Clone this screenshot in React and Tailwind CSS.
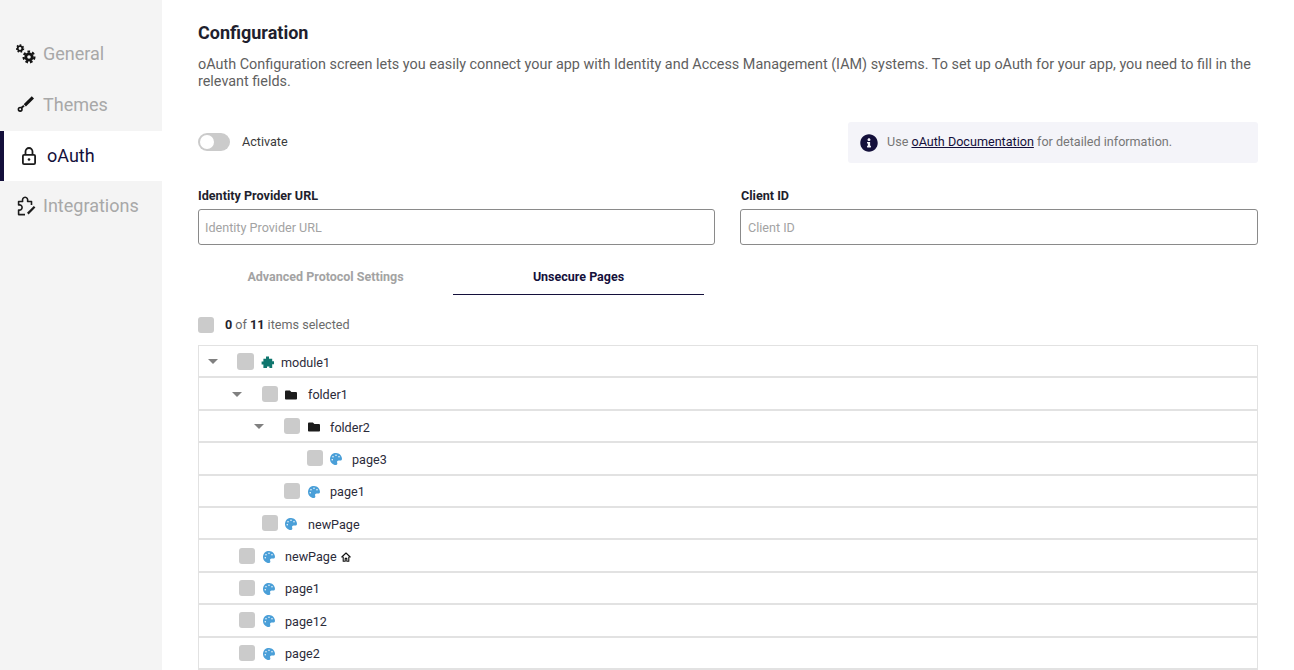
import { FaFolder, FaPalette, FaInfoCircle } from 'react-icons/fa';

const GearsIcon = () => (
    <svg viewBox="0 0 20 20" className="w-5 h-5 text-[#141414]" fill="none" stroke="currentColor">
        <circle cx="4" cy="4.5" r="2.3" strokeWidth="1.8" />
        <circle cx="4" cy="4.5" r="3.5" strokeWidth="1.5" strokeDasharray="1.6 1.55" />
        <circle cx="13" cy="13" r="3.2" strokeWidth="2.8" />
        <circle cx="13" cy="13" r="5.4" strokeWidth="2.2" strokeDasharray="2.6 2.05" />
    </svg>
);

const BrushIcon = () => (
    <svg viewBox="0 0 20 20" className="w-5 h-5 text-[#141414]" fill="none" stroke="currentColor">
        <path d="M16.9 2.3L8.8 10.4" strokeWidth="3.2" />
        <circle cx="4.2" cy="14.3" r="1.8" strokeWidth="1.6" />
        <path d="M5.4 12.8L8 10.8" strokeWidth="2" />
    </svg>
);

const LockIcon = () => (
    <svg viewBox="0 0 14 18" className="w-[14px] h-[18px] text-[#1c1c1c]" fill="none" stroke="currentColor">
        <rect x="0.9" y="7.9" width="12.2" height="9.2" rx="1.2" strokeWidth="1.8" />
        <path d="M3.5 8V4.5a3.5 3.5 0 0 1 7 0V8" strokeWidth="1.8" />
        <circle cx="7" cy="12.5" r="1.3" fill="currentColor" stroke="none" />
    </svg>
);

const IntegrationIcon = () => (
    <svg viewBox="0 0 20 20" className="w-5 h-5 text-[#1c1c1c]" fill="none" stroke="currentColor">
        <path
            d="M15.5 9V5.5H11.6C12.1 3 10.9 1.2 9.1 1.2C7.3 1.2 6.1 3 6.6 5.5H2.6V9C4.6 8.5 6.1 9.8 6.1 11.5C6.1 13.2 4.6 14.5 2.6 14V18.6H9"
            strokeWidth="1.6"
            strokeLinejoin="round"
        />
        <path d="M18.6 10.8L11.8 17.6" strokeWidth="2.2" />
    </svg>
);

const ModuleIcon = () => (
    <svg viewBox="0 0 13 13" className="w-[13px] h-[13px] text-[#0f766e]" fill="currentColor">
        <path d="M5 .5h3v2.2h3.2v2.6H13v3h-1.8V12H8.4v-1.6H6V12H2.4V8.6H.6V5.4h1.8V2.7H5z" />
    </svg>
);

const HomeIcon = () => (
    <svg viewBox="0 0 10 10" className="w-[10px] h-[10px] -mt-[2px] text-[#111111]" fill="none" stroke="currentColor" strokeWidth="1.1">
        <path d="M5 1L.8 5H2.2V9.3H4.2V6.4H5.8V9.3H7.8V5H9.2Z" strokeLinejoin="round" />
    </svg>
);

const navItems = [
    { label: 'General', icon: <GearsIcon /> },
    { label: 'Themes', icon: <BrushIcon /> },
    { label: 'oAuth', active: true, icon: <LockIcon /> },
    { label: 'Integrations', icon: <IntegrationIcon /> },
];

const rows = [
    { name: 'module1', type: 'module', arrow: 208, box: 237, icon: 261, text: 281, big: true },
    { name: 'folder1', type: 'folder', arrow: 232, box: 262, icon: 285, text: 308 },
    { name: 'folder2', type: 'folder', arrow: 254, box: 284, icon: 308, text: 330 },
    { name: 'page3', type: 'page', box: 307, icon: 330, text: 352 },
    { name: 'page1', type: 'page', box: 284, icon: 308, text: 330 },
    { name: 'newPage', type: 'page', box: 262, icon: 285, text: 308 },
    { name: 'newPage', type: 'page', box: 239, icon: 263, text: 285, home: true },
    { name: 'page1', type: 'page', box: 239, icon: 263, text: 285 },
    { name: 'page12', type: 'page', box: 239, icon: 263, text: 285 },
    { name: 'page2', type: 'page', box: 239, icon: 263, text: 285 },
];

const TreeIcon = ({ type }) => {
    if (type === 'module') return <ModuleIcon />;
    if (type === 'folder') return <FaFolder className="w-[12px] h-[12px] text-[#1c1c1c]" />;
    return <FaPalette className="w-[12px] h-[12px] text-[#4a9fd8]" />;
};

const TreeRow = ({ row }) => {
    const boxSize = row.big ? 17 : 16;
    return (
        <div
            className="h-[32.4px] flex items-center border-b-2 border-[#e2e2e2] text-[12.6px] text-[#2b2b3a]"
            style={{ paddingLeft: (row.arrow || row.box) - 199 }}
        >
            {row.arrow && (
                <span
                    className="shrink-0 w-0 h-0 mt-[1px] border-x-[5px] border-x-transparent border-t-[5px] border-t-[#808080]"
                    style={{ marginRight: row.box - row.arrow - 10 }}
                />
            )}
            <span
                className="shrink-0 rounded-[3px] bg-[#cbcbcb]"
                style={{ width: boxSize, height: boxSize, marginRight: row.icon - row.box - boxSize }}
            />
            <span className="shrink-0 flex items-center pt-[2px]" style={{ width: row.text - row.icon }}>
                <TreeIcon type={row.type} />
            </span>
            <span className="flex items-center gap-1 pt-[4px]">
                {row.name}
                {row.home && <HomeIcon />}
            </span>
        </div>
    );
};

const Field = ({ label, className, labelClass, inputClass }) => (
    <div className={className}>
        <label className={`block text-[12.6px] font-bold text-[#1f1f2e] leading-[16px] mb-[5px] ${labelClass}`}>{label}</label>
        <div className={`h-[36px] border border-[#8a8a8a] rounded-[3px] pt-[2px] flex items-center text-[12.6px] text-[#a3a3a3] ${inputClass}`}>
            {label}
        </div>
    </div>
);

const App = () => {
    return (
        <div className="flex h-[670px] overflow-hidden bg-white font-['Roboto',sans-serif]">
            {/* Sidebar */}
            <div className="w-[162px] shrink-0 bg-[#f4f4f4] pt-[29px]">
                {navItems.map((item) =>
                    item.active ? (
                        <div
                            key={item.label}
                            className="h-[50px] flex items-center gap-[11px] pl-[18px] bg-white border-l-4 border-[#14103b] text-[18px] text-[#14103b]"
                        >
                            {item.icon}
                            <span className="pb-[2px]">{item.label}</span>
                        </div>
                    ) : (
                        <div
                            key={item.label}
                            className={`${item.label === 'Integrations' ? 'h-[50px]' : 'h-[51px] pb-[1px]'} flex items-center gap-[7px] pl-[16px] text-[18px] text-[#a8a8a8]`}
                        >
                            {item.icon}
                            <span className="pb-[2px]">{item.label}</span>
                        </div>
                    )
                )}
            </div>

            {/* Main */}
            <div className="flex-1 pl-[36px] pr-[36px] pt-[22px]">
                <h1 className="text-[18px] font-bold text-[#1f1f2e] leading-[22px]">Configuration</h1>
                <p className="mt-[12px] text-[14.4px] leading-[17px] text-[#5f5f5f]">
                    oAuth Configuration screen lets you easily connect your app with Identity and Access Management (IAM) systems. To set up oAuth for your app, you need to fill in the relevant fields.
                </p>

                <div className="mt-[32px] flex items-center justify-between h-[41px]">
                    <div className="flex items-center gap-[12px]">
                        <div className="w-[32px] h-[18px] rounded-full bg-[#cbcbcb] p-[2px]">
                            <div className="w-[14px] h-[14px] rounded-full bg-white" />
                        </div>
                        <span className="text-[12.6px] text-[#3a3a3a]">Activate</span>
                    </div>
                    <div className="w-[410px] h-[41px] bg-[#f4f4f9] rounded-[3px] flex items-center gap-[9px] pl-[12px] text-[12.6px] text-[#777777]">
                        <FaInfoCircle className="w-[18px] h-[18px] text-[#14103b]" />
                        <span>
                            Use <span className="underline text-[#14103b]">oAuth Documentation</span> for detailed information.
                        </span>
                    </div>
                </div>

                <div className="mt-[25px] flex gap-[25px]">
                    <Field label="Identity Provider URL" className="w-[517px]" labelClass="" inputClass="pl-[6px]" />
                    <Field label="Client ID" className="flex-1" labelClass="pl-[1px]" inputClass="pl-[7px]" />
                </div>

                <div className="mt-[14px] flex text-[12.5px] font-bold h-[36px]">
                    <div className="w-[255px] flex items-center justify-center text-[#a3a3a3]">Advanced Protocol Settings</div>
                    <div className="w-[251px] pt-[1px] flex items-center justify-center text-[#14103b] border-b border-[#14103b]">Unsecure Pages</div>
                </div>

                <div className="mt-[21px] flex items-center gap-[11px] h-[17px] text-[12.6px] text-[#6b6b6b]">
                    <span className="w-4 h-4 rounded-[3px] bg-[#cbcbcb]" />
                    <span className="pt-[2px]">
                        <b className="text-[#1f1f2e]">0</b> of <b className="text-[#1f1f2e]">11</b> items selected
                    </span>
                </div>

                <div className="mt-[12px] border-x border-t border-[#e2e2e2]">
                    {rows.map((row, i) => (
                        <TreeRow key={i} row={row} />
                    ))}
                </div>
            </div>
        </div>
    );
};

export default App;
